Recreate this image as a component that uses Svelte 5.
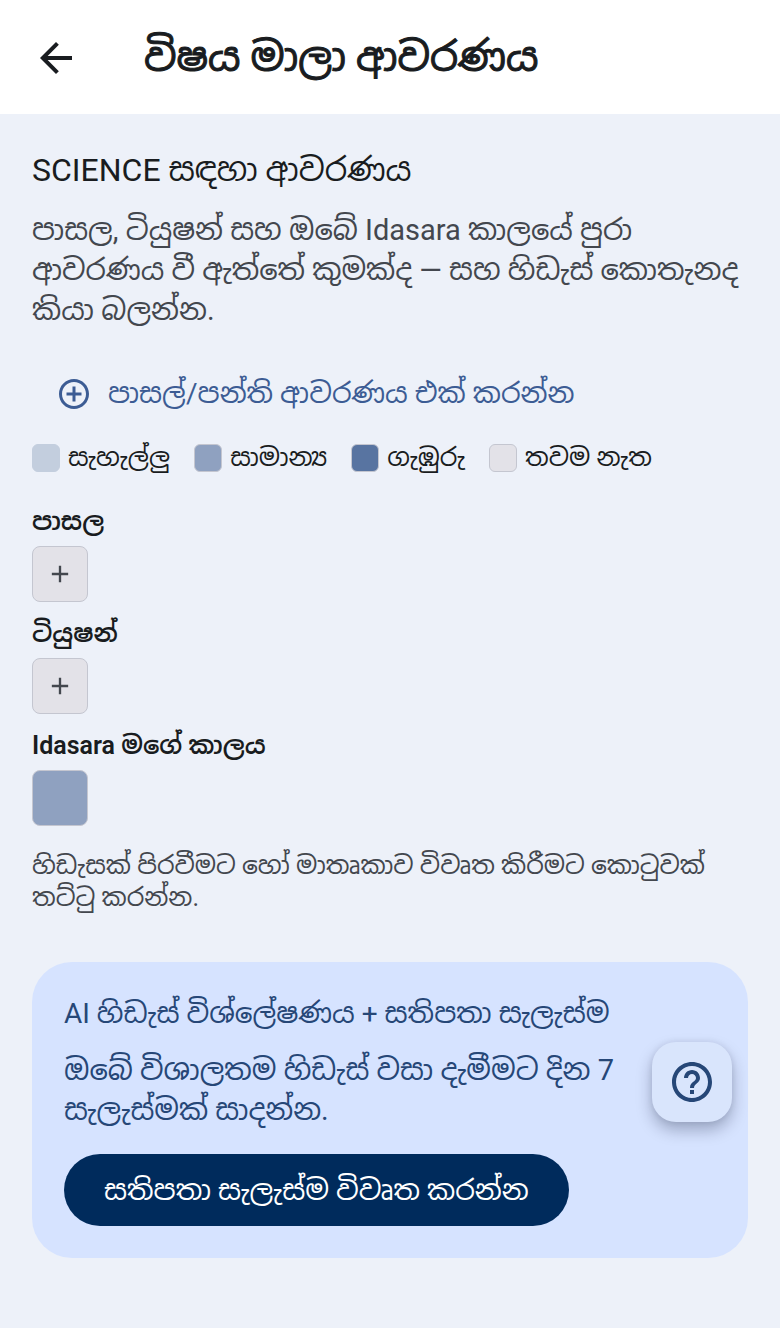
<script lang="ts">
	const levels = [
		{ label: 'සැහැල්ලු', tone: 'light' },
		{ label: 'සාමාන්‍ය', tone: 'medium' },
		{ label: 'ගැඹුරු', tone: 'deep' },
		{ label: 'තවම නැත', tone: 'none' }
	];

	const sources = [
		{ name: 'පාසල', tone: 'none' },
		{ name: 'ටියුෂන්', tone: 'none' },
		{ name: 'Idasara මගේ කාලය', tone: 'medium' }
	];
</script>

<div class="screen">
	<header>
		<button class="back" aria-label="Back">
			<svg viewBox="0 0 24 24" width="48" height="48"><path d="M20 11H7.83l5.59-5.59L12 4l-8 8 8 8 1.41-1.41L7.83 13H20z" /></svg>
		</button>
		<h1>විෂය මාලා ආවරණය</h1>
	</header>

	<main>
		<h2>SCIENCE සඳහා ආවරණය</h2>
		<p class="intro">
			පාසල, ටියුෂන් සහ ඔබේ Idasara කාලයේ පුරා<br />
			ආවරණය වී ඇත්තේ කුමක්ද — සහ හිඩැස් කොතැනද<br />
			කියා බලන්න.
		</p>

		<button class="add">
			<svg viewBox="0 0 24 24" width="36" height="36"><path d="M13 7h-2v4H7v2h4v4h2v-4h4v-2h-4V7zm-1-5C6.48 2 2 6.48 2 12s4.48 10 10 10 10-4.48 10-10S17.52 2 12 2zm0 18c-4.41 0-8-3.59-8-8s3.59-8 8-8 8 3.59 8 8-3.59 8-8 8z" /></svg>
			<span>පාසල්/පන්ති ආවරණය එක් කරන්න</span>
		</button>

		<ul class="legend">
			{#each levels as level}
				<li><span class="swatch {level.tone}"></span>{level.label}</li>
			{/each}
		</ul>

		{#each sources as source}
			<section>
				<h3>{source.name}</h3>
				<button class="cell {source.tone}" aria-label={source.name}>
					{#if source.tone === 'none'}
						<svg viewBox="0 0 24 24" width="28" height="28"><path d="M19 13h-6v6h-2v-6H5v-2h6V5h2v6h6z" /></svg>
					{/if}
				</button>
			</section>
		{/each}

		<p class="hint">
			හිඩැසක් පිරවීමට හෝ මාතෘකාව විවෘත කිරීමට කොටුවක්<br />
			තට්ටු කරන්න.
		</p>

		<div class="card">
			<h2>AI හිඩැස් විශ්ලේෂණය + සතිපතා සැලැස්ම</h2>
			<p>
				ඔබේ විශාලතම හිඩැස් වසා දැමීමට දින 7<br />
				සැලැස්මක් සාදන්න.
			</p>
			<button class="open">සතිපතා සැලැස්ම විවෘත කරන්න</button>
		</div>
	</main>

	<button class="help" aria-label="Help">
		<svg viewBox="0 0 24 24" width="48" height="48"><path d="M11 18h2v-2h-2v2zm1-16C6.48 2 2 6.48 2 12s4.48 10 10 10 10-4.48 10-10S17.52 2 12 2zm0 18c-4.41 0-8-3.59-8-8s3.59-8 8-8 8 3.59 8 8-3.59 8-8 8zm0-14c-2.21 0-4 1.79-4 4h2c0-1.1.9-2 2-2s2 .9 2 2c0 2-3 1.75-3 5h2c0-2.25 3-2.5 3-5 0-2.21-1.79-4-4-4z" /></svg>
	</button>
</div>

<style>
	:global(body) {
		margin: 0;
		background: #edf1f9;
	}

	.screen {
		position: relative;
		min-height: 100vh;
		font-family: Roboto, 'Noto Sans Sinhala', 'Noto Sans', sans-serif;
		color: #191c20;
	}

	h1, h2, h3, p, ul { margin: 0; padding: 0; font-weight: 400; }

	button {
		padding: 0;
		border: 0;
		background: none;
		font: inherit;
		color: inherit;
		cursor: pointer;
	}

	svg { display: block; fill: currentColor; }

	header {
		display: flex;
		align-items: center;
		gap: 64px;
		box-sizing: border-box;
		height: 114px;
		padding: 2px 32px 0;
		background: #fff;
	}

	h1 {
		font-size: 40px;
		line-height: 56px;
		-webkit-text-stroke: 1px currentColor;
		white-space: nowrap;
	}

	main { padding: 32px; }

	h2 {
		font-size: 32px;
		line-height: 48px;
		white-space: nowrap;
	}

	.intro {
		margin-top: 16px;
		font-size: 29px;
		line-height: 40px;
		color: #43474e;
		white-space: nowrap;
	}

	.add {
		display: flex;
		align-items: center;
		gap: 16px;
		height: 80px;
		margin-top: 24px;
		padding: 0 24px;
		font-size: 28px;
		line-height: 40px;
		color: #3c5c94;
		white-space: nowrap;
	}

	.legend {
		display: flex;
		gap: 24px;
		margin-top: 8px;
		list-style: none;
		font-size: 25px;
		line-height: 32px;
		white-space: nowrap;
	}

	.legend li {
		display: flex;
		align-items: center;
		gap: 8px;
	}

	.swatch {
		box-sizing: border-box;
		width: 28px;
		height: 28px;
		border: 1px solid #c4c6d0;
		border-radius: 6px;
	}

	.light { background: #c3cede; border-color: #c3cede; }
	.medium { background: #8fa1c0; }
	.deep { background: #5874a1; }
	.none { background: #e3e2e8; }

	.legend + section { margin-top: 32px; }

	section { margin-bottom: 16px; }

	h3 {
		margin-bottom: 8px;
		font-size: 25px;
		line-height: 32px;
		font-weight: 600;
	}

	.cell {
		display: grid;
		place-items: center;
		box-sizing: border-box;
		width: 56px;
		height: 56px;
		border: 1px solid #c4c6d0;
		border-radius: 8px;
		color: #43474e;
	}

	.hint {
		margin-top: 24px;
		font-size: 25px;
		line-height: 32px;
		color: #43474e;
		white-space: nowrap;
	}

	.card {
		margin-top: 48px;
		padding: 32px;
		border-radius: 40px;
		background: #d6e3ff;
		color: #264777;
	}

	.card h2 { font-size: 28px; line-height: 40px; }

	.card p {
		margin-top: 16px;
		font-size: 29px;
		line-height: 40px;
		white-space: nowrap;
	}

	.open {
		height: 72px;
		margin-top: 24px;
		padding: 0 40px;
		border-radius: 36px;
		background: #002b5c;
		color: #fff;
		font-size: 28px;
		white-space: nowrap;
	}

	/* floats over the plan card */
	.help {
		position: absolute;
		right: 48px;
		top: 1042px;
		display: grid;
		place-items: center;
		width: 80px;
		height: 80px;
		border-radius: 24px;
		background: #d9e5fc;
		color: #264777;
		box-shadow: 0 8px 16px rgb(0 10 40 / 28%), 0 0 6px rgb(0 10 40 / 8%);
	}
</style>
